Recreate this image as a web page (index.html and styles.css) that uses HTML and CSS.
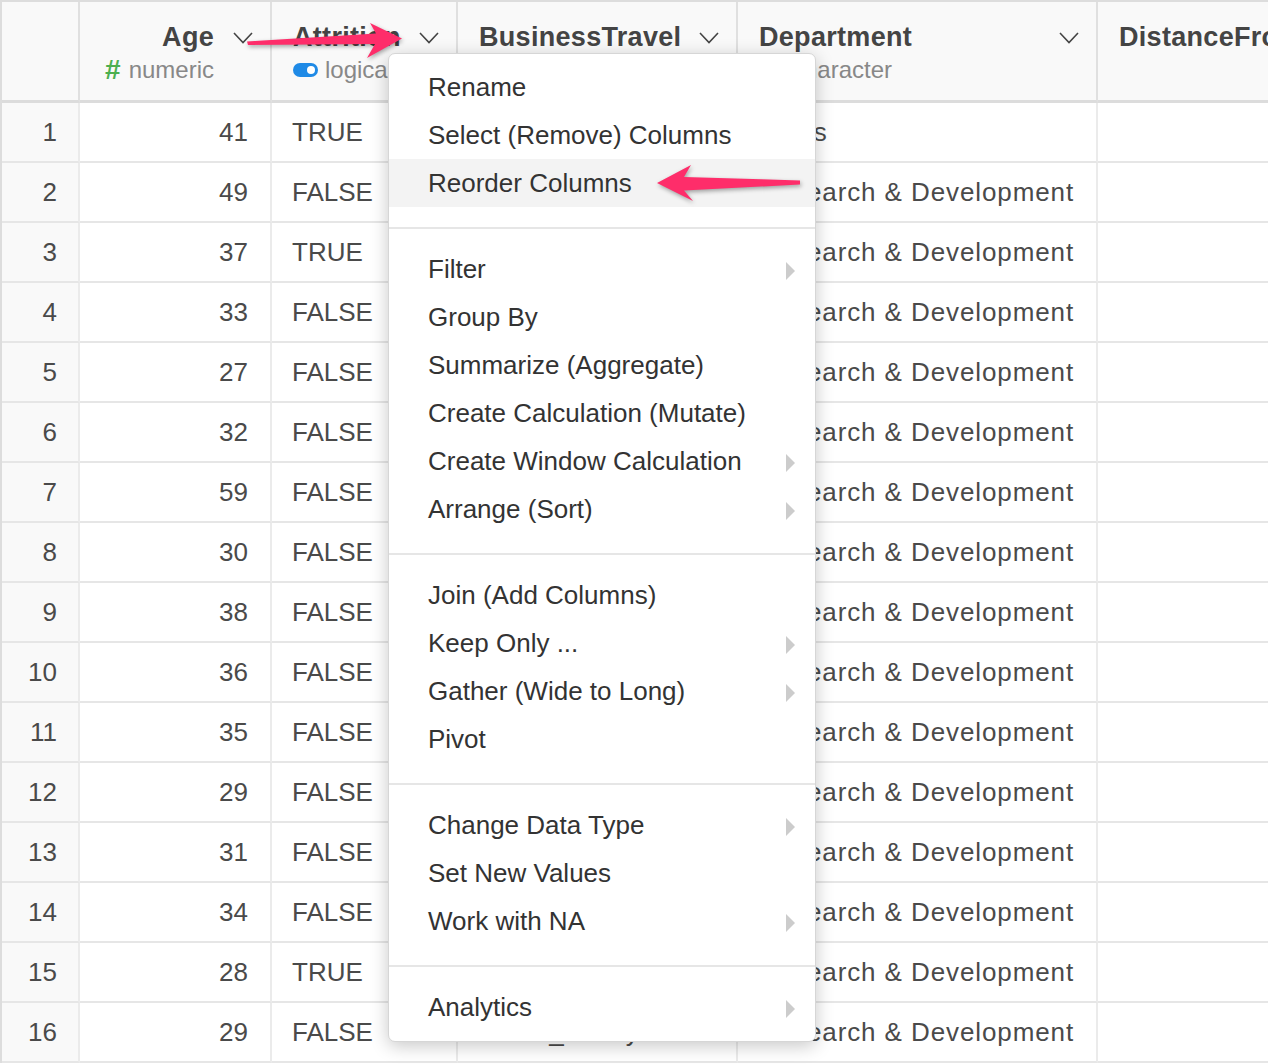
FILE: index.html
```html
<!DOCTYPE html>
<html>
<head>
<meta charset="utf-8">
<title>Data grid column menu</title>
<link rel="stylesheet" href="styles.css">
</head>
<body>
<div class="stage">
  <div class="grid">
    <!-- header -->
    <div class="hcell rncol"></div>
    <div class="hcell numcol">
      <div class="htop"><span class="htitle">Age</span><svg class="chev" width="20" height="12" viewBox="0 0 20 12"><polyline points="1,1 10,10.5 19,1" /></svg></div>
      <div class="hsub"><span class="hash">#</span><span>numeric</span></div>
    </div>
    <div class="hcell">
      <div class="htop"><span class="htitle">Attrition</span><svg class="chev" width="20" height="12" viewBox="0 0 20 12"><polyline points="1,1 10,10.5 19,1" /></svg></div>
      <div class="hsub"><span class="toggle"></span><span>logical</span></div>
    </div>
    <div class="hcell">
      <div class="htop"><span class="htitle">BusinessTravel</span><svg class="chev" width="20" height="12" viewBox="0 0 20 12"><polyline points="1,1 10,10.5 19,1" /></svg></div>
      <div class="hsub"><span class="charicon">Aa</span><span>character</span></div>
    </div>
    <div class="hcell">
      <div class="htop"><span class="htitle">Department</span><svg class="chev" width="20" height="12" viewBox="0 0 20 12"><polyline points="1,1 10,10.5 19,1" /></svg></div>
      <div class="hsub"><span class="charicon">Aa</span><span>character</span></div>
    </div>
    <div class="hcell lastcol">
      <div class="htop"><span class="htitle">DistanceFromHome</span><svg class="chev" width="20" height="12" viewBox="0 0 20 12"><polyline points="1,1 10,10.5 19,1" /></svg></div>
    </div>

    <div class="cell rn">1</div><div class="cell num">41</div><div class="cell">TRUE</div><div class="cell">Travel_Rarely</div><div class="cell dept">Sales</div><div class="cell lastcol"></div>
    <div class="cell rn">2</div><div class="cell num">49</div><div class="cell">FALSE</div><div class="cell">Travel_Frequently</div><div class="cell dept">Research &amp; Development</div><div class="cell lastcol"></div>
    <div class="cell rn">3</div><div class="cell num">37</div><div class="cell">TRUE</div><div class="cell">Travel_Rarely</div><div class="cell dept">Research &amp; Development</div><div class="cell lastcol"></div>
    <div class="cell rn">4</div><div class="cell num">33</div><div class="cell">FALSE</div><div class="cell">Travel_Frequently</div><div class="cell dept">Research &amp; Development</div><div class="cell lastcol"></div>
    <div class="cell rn">5</div><div class="cell num">27</div><div class="cell">FALSE</div><div class="cell">Travel_Rarely</div><div class="cell dept">Research &amp; Development</div><div class="cell lastcol"></div>
    <div class="cell rn">6</div><div class="cell num">32</div><div class="cell">FALSE</div><div class="cell">Travel_Frequently</div><div class="cell dept">Research &amp; Development</div><div class="cell lastcol"></div>
    <div class="cell rn">7</div><div class="cell num">59</div><div class="cell">FALSE</div><div class="cell">Travel_Rarely</div><div class="cell dept">Research &amp; Development</div><div class="cell lastcol"></div>
    <div class="cell rn">8</div><div class="cell num">30</div><div class="cell">FALSE</div><div class="cell">Travel_Rarely</div><div class="cell dept">Research &amp; Development</div><div class="cell lastcol"></div>
    <div class="cell rn">9</div><div class="cell num">38</div><div class="cell">FALSE</div><div class="cell">Travel_Frequently</div><div class="cell dept">Research &amp; Development</div><div class="cell lastcol"></div>
    <div class="cell rn">10</div><div class="cell num">36</div><div class="cell">FALSE</div><div class="cell">Travel_Rarely</div><div class="cell dept">Research &amp; Development</div><div class="cell lastcol"></div>
    <div class="cell rn">11</div><div class="cell num">35</div><div class="cell">FALSE</div><div class="cell">Travel_Rarely</div><div class="cell dept">Research &amp; Development</div><div class="cell lastcol"></div>
    <div class="cell rn">12</div><div class="cell num">29</div><div class="cell">FALSE</div><div class="cell">Travel_Rarely</div><div class="cell dept">Research &amp; Development</div><div class="cell lastcol"></div>
    <div class="cell rn">13</div><div class="cell num">31</div><div class="cell">FALSE</div><div class="cell">Travel_Rarely</div><div class="cell dept">Research &amp; Development</div><div class="cell lastcol"></div>
    <div class="cell rn">14</div><div class="cell num">34</div><div class="cell">FALSE</div><div class="cell">Travel_Rarely</div><div class="cell dept">Research &amp; Development</div><div class="cell lastcol"></div>
    <div class="cell rn">15</div><div class="cell num">28</div><div class="cell">TRUE</div><div class="cell">Travel_Rarely</div><div class="cell dept">Research &amp; Development</div><div class="cell lastcol"></div>
    <div class="cell rn">16</div><div class="cell num">29</div><div class="cell">FALSE</div><div class="cell">Travel_Rarely</div><div class="cell dept">Research &amp; Development</div><div class="cell lastcol"></div>
  </div>

  <div class="menu">
    <div class="mi">Rename</div>
    <div class="mi">Select (Remove) Columns</div>
    <div class="mi active">Reorder Columns</div>
    <div class="msep"></div>
    <div class="mi sub">Filter</div>
    <div class="mi">Group By</div>
    <div class="mi">Summarize (Aggregate)</div>
    <div class="mi">Create Calculation (Mutate)</div>
    <div class="mi sub">Create Window Calculation</div>
    <div class="mi sub">Arrange (Sort)</div>
    <div class="msep"></div>
    <div class="mi">Join (Add Columns)</div>
    <div class="mi sub">Keep Only ...</div>
    <div class="mi sub">Gather (Wide to Long)</div>
    <div class="mi">Pivot</div>
    <div class="msep"></div>
    <div class="mi sub">Change Data Type</div>
    <div class="mi">Set New Values</div>
    <div class="mi sub">Work with NA</div>
    <div class="msep"></div>
    <div class="mi sub">Analytics</div>
  </div>

  <svg class="arrows" width="1268" height="1064" viewBox="0 0 1268 1064">
    <polygon points="247,41.5 376,33.5 370,23 402,38.5 367,58 375,44 248,45" />
    <polygon points="657,183 691,165 684,177 800,180.5 800,184.5 684,190.5 693,201" />
  </svg>
</div>
</body>
</html>
```

FILE: styles.css
```css
html, body {
  margin: 0;
  padding: 0;
  overflow: hidden;
  background: #ffffff;
}

body {
  width: 1268px;
  height: 1064px;
  font-family: "Liberation Sans", Arial, Helvetica, sans-serif;
  color: #4a4a4a;
}

.stage {
  position: relative;
  width: 1268px;
  height: 1064px;
  overflow: hidden;
}

.grid {
  display: grid;
  grid-template-columns: 78px 192px 186px 280px 360px 420px;
  width: max-content;
  border-top: 2px solid #dddddd;
  border-left: 2px solid #dddddd;
}

.hcell {
  box-sizing: border-box;
  height: 101px;
  background: #f9f9f9;
  border-right: 2px solid #e0e0e0;
  border-bottom: 3px solid #dcdcdc;
  padding: 20px 17px 0 21px;
  overflow: hidden;
}

.htop {
  display: flex;
  align-items: center;
  height: 30px;
}

.htitle {
  flex: 1 0 auto;
  font-size: 27px;
  font-weight: bold;
  color: #444444;
  white-space: nowrap;
  letter-spacing: 0.3px;
}

.numcol .htitle {
  text-align: right;
}

.chev {
  flex: none;
  margin-left: 17px;
  margin-top: 2px;
}

.chev polyline {
  fill: none;
  stroke: #444444;
  stroke-width: 1.6;
}

.numcol .chev {
  margin-left: 19px;
}

.hsub {
  display: flex;
  align-items: center;
  gap: 7px;
  margin-top: 4px;
  height: 28px;
  font-size: 24px;
  color: #888888;
  white-space: nowrap;
}

.numcol .hsub {
  justify-content: flex-end;
  padding-right: 39px;
  gap: 8px;
}

.hash {
  color: #4caf50;
  font-weight: bold;
  font-size: 28px;
}

.toggle {
  position: relative;
  width: 25px;
  height: 14px;
  border-radius: 7px;
  background: #1f8ae6;
  flex: none;
}

.toggle::after {
  content: "";
  position: absolute;
  right: 3px;
  top: 3px;
  width: 8px;
  height: 8px;
  border-radius: 50%;
  background: #ffffff;
}

.charicon {
  font-size: 18px;
  font-weight: bold;
  color: #e8a33d;
  width: 26px;
}

.cell {
  box-sizing: border-box;
  height: 60px;
  display: flex;
  align-items: center;
  padding: 0 20px;
  font-size: 26px;
  color: #4a4a4a;
  border-right: 2px solid #ebebeb;
  border-bottom: 2px solid #e6e6e6;
  white-space: nowrap;
  overflow: hidden;
}

.rn {
  background: #f9f9f9;
  justify-content: flex-end;
  padding-right: 21px;
}

.num {
  justify-content: flex-end;
  padding-right: 22px;
}

.dept {
  letter-spacing: 0.9px;
}

.menu {
  position: absolute;
  left: 388px;
  top: 53px;
  width: 428px;
  box-sizing: border-box;
  padding: 9px 0 10px;
  background: #ffffff;
  border: 1px solid #d6d6d6;
  border-radius: 7px;
  box-shadow: 0 4px 18px rgba(0, 0, 0, 0.22);
}

.mi {
  position: relative;
  height: 48px;
  line-height: 48px;
  padding-left: 39px;
  font-size: 26px;
  color: #333333;
  white-space: nowrap;
}

.mi.active {
  background: #f3f3f3;
}

.mi.sub::after {
  content: "";
  position: absolute;
  right: 20px;
  top: 17px;
  border-left: 9px solid #cccccc;
  border-top: 9px solid transparent;
  border-bottom: 9px solid transparent;
}

.msep {
  height: 2px;
  background: #e6e6e6;
  margin: 20px 0 16px;
}

.arrows {
  position: absolute;
  left: 0;
  top: 0;
  pointer-events: none;
  filter: drop-shadow(1px 2px 2px rgba(0, 0, 0, 0.35));
}

.arrows polygon {
  fill: #fe2d6a;
}
```
